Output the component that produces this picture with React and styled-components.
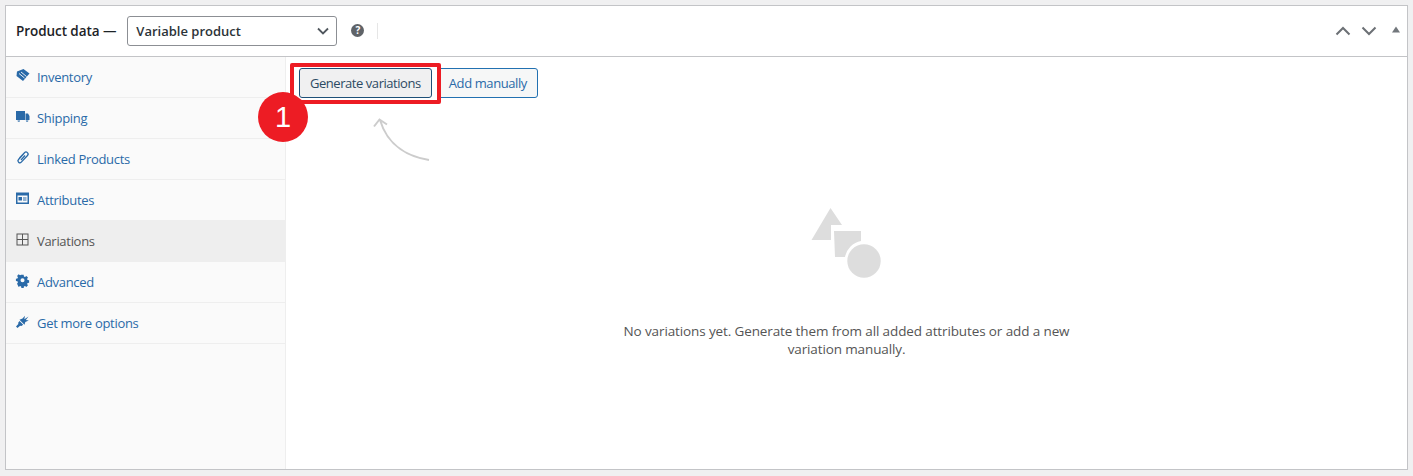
import React from 'react';
import styled, { createGlobalStyle } from 'styled-components';

const Global = createGlobalStyle`
  html, body { margin: 0; padding: 0; background: #f0f0f1; }
  body { font-family: "Open Sans", "Noto Sans", "Liberation Sans", sans-serif; font-size: 13px; }
`;

const Page = styled.div`
  width: 1413px;
  height: 476px;
  padding: 5px 5px 6px 5px;
  box-sizing: border-box;
`;

const Panel = styled.div`
  height: 100%;
  box-sizing: border-box;
  border: 1px solid #c3c4c7;
  background: #fff;
  display: flex;
  flex-direction: column;
`;

const Header = styled.div`
  flex: 0 0 50px;
  display: flex;
  align-items: center;
  border-bottom: 1px solid #c3c4c7;
  padding: 0 10px;
`;

const Title = styled.span`
  font-size: 13.5px;
  font-weight: 600;
  letter-spacing: -0.07px;
  color: #1d2327;
`;

const TypeSelect = styled.div`
  width: 210px;
  height: 30px;
  margin-left: 11px;
  box-sizing: border-box;
  border: 1px solid #8c8f94;
  border-radius: 3px;
  display: flex;
  align-items: center;
  justify-content: space-between;
  padding: 0 7px 0 8px;
  font-size: 13px;
  font-weight: 600;
  color: #2c3338;
`;

const HelpDot = styled.span`
  width: 13px;
  height: 13px;
  margin-left: 14px;
  margin-top: -2px;
  border-radius: 50%;
  background: #5f6368;
  color: #fff;
  font-size: 10px;
  font-weight: 700;
  line-height: 13px;
  text-align: center;
`;

const Divider = styled.span`
  width: 1px;
  height: 16px;
  margin-left: 13px;
  background: #e6e6e6;
`;

const Controls = styled.div`
  margin-left: auto;
  display: flex;
  align-items: center;
  gap: 10px;
  margin-right: -4px;
`;

const Triangle = styled.svg`
  margin-left: 4px;
  margin-top: -2px;
`;

const Body = styled.div`
  flex: 1;
  display: flex;
  min-height: 0;
`;

const Sidebar = styled.ul`
  flex: 0 0 279px;
  margin: 0;
  padding: 0;
  list-style: none;
  background: #fafafa;
  border-right: 1px solid #eee;
`;

const Tab = styled.li`
  height: 41px;
  box-sizing: border-box;
  padding-left: 10px;
  display: flex;
  align-items: center;
  gap: 8px;
  font-size: 13px;
  letter-spacing: -0.3px;
  color: ${p => (p.$active ? '#555' : '#2a6aa8')};
  background: ${p => (p.$active ? '#eee' : 'transparent')};
  border-bottom: 1px solid #eee;
  margin-right: ${p => (p.$active ? '-1px' : '0')};
`;

const TabIcon = styled.svg`
  width: 13px;
  height: 13px;
  flex: none;
  margin-top: -4px;
  overflow: visible;
  fill: currentColor;
`;

const Content = styled.div`
  flex: 1;
  position: relative;
  display: flex;
  flex-direction: column;
`;

const Actions = styled.div`
  display: flex;
  gap: 6px;
  padding: 11px 0 0 13px;
`;

const Button = styled.button`
  height: 30px;
  box-sizing: border-box;
  padding: 0 10px;
  border: 1px solid ${p => (p.$focus ? '#1d4f78' : '#2271b1')};
  border-radius: 3px;
  background: ${p => (p.$focus ? '#f0f0f1' : '#f6f7f7')};
  color: ${p => (p.$focus ? '#2c4a63' : '#2a6aa8')};
  font-family: inherit;
  font-size: 13px;
  letter-spacing: ${p => (p.$focus ? '-0.45px' : '-0.4px')};
  white-space: nowrap;
`;

const Highlight = styled.div`
  position: absolute;
  left: 4px;
  top: 6px;
  width: 151px;
  height: 41px;
  box-sizing: border-box;
  border: 4px solid #ed1c24;
  border-radius: 2px;
`;

const Badge = styled.div`
  position: absolute;
  left: -28px;
  top: 35px;
  width: 50px;
  height: 50px;
  border-radius: 50%;
  background: #ed1c24;
  color: #fff;
  font-family: "Liberation Sans", sans-serif;
  font-size: 29px;
  line-height: 50px;
  text-align: center;
`;

const Arrow = styled.svg`
  position: absolute;
  left: 86px;
  top: 60px;
  width: 62px;
  height: 46px;
  fill: none;
  stroke: #ccc;
  stroke-width: 2;
`;

const Empty = styled.div`
  display: flex;
  flex-direction: column;
  align-items: center;
  padding-top: 109px;
  color: #555;
`;

const Shapes = styled.svg`
  width: 72px;
  height: 72px;
  flex: none;
  fill: #ddd;
`;

const Message = styled.p`
  width: 470px;
  margin: 43px 0 0;
  font-size: 13.5px;
  line-height: 18px;
  text-align: center;
  letter-spacing: -0.12px;
`;

const icons = {
  tag: (
    <>
      <path d="M7.500 0 L13.500 4.500 L7 12 L0.500 7 L1 2.500 Z" />
      <path d="M3 4.500 8.500 9M5 3 10.500 7.500" stroke="#fafafa" strokeWidth="0.9" />
    </>
  ),
  truck: <path d="M0 1h9v9H0zM9.500 3.500H12l1.500 2.500v4h-4zM1.500 10.500a1.300 1.300 0 1 0 2.600 0zM9.800 10.500a1.300 1.300 0 1 0 2.600 0z" />,
  link: (
    <g fill="none" stroke="currentColor" strokeWidth="1.300">
      <path d="M7.500 3 2.500 8.500a1.900 1.900 0 0 0 2.800 2.600L11.500 4.500A2 2 0 0 0 8.500 1.700L3.500 7" />
      <path d="M9 4.500 5 9" />
    </g>
  ),
  card: <path fillRule="evenodd" d="M0 0.500h13v11.500H0zM1.500 3.500v7h10v-7zM2.500 5h3.500v3.500H2.500zM7 5.500h3.500v1H7zM7 7.500h3.500v1H7z" />,
  grid: <path fillRule="evenodd" d="M0.500 0.500h12v12h-12zM1.500 1.500v4.500h4.500v-4.500zM7 1.500v4.500h4.500v-4.500zM1.500 7v4.500h4.500V7zM7 7v4.500h4.500V7z" />,
  gear: <path fillRule="evenodd" d="M5.200 0h2.600l.3 1.800 1.200.6 1.600-1 1.800 1.800-1 1.600.6 1.200 1.700.3v2.600l-1.700.3-.6 1.200 1 1.600-1.800 1.800-1.600-1-1.200.5-.3 1.700H5.200l-.3-1.700-1.200-.5-1.600 1L.3 10.100l1-1.600-.6-1.200L-1 7V4.400l1.700-.3.6-1.200-1-1.600L2.100-.5l1.600 1 1.200-.6zM6.500 4a2.300 2.300 0 1 0 0 4.600 2.300 2.300 0 0 0 0-4.600z" transform="translate(0.800 0.800) scale(0.880)" />,
  plug: <path d="M12.500 1.500 8.300 4.300 9 0.800 6.500 3.500 3.500 4.700 8.500 9.700 9.300 7l3.500-1.500-3-.6zM3.500 6l3.700 3.700-1.800 1.300-1.300-.3L1.500 13 0 11.500l2.300-2.500-.1-1.200z" />,
};

const tabs = [
  ['Inventory', 'tag'],
  ['Shipping', 'truck'],
  ['Linked Products', 'link'],
  ['Attributes', 'card'],
  ['Variations', 'grid'],
  ['Advanced', 'gear'],
  ['Get more options', 'plug'],
];

const Chevron = ({ up }) => (
  <svg width="16" height="10" viewBox="0 0 16 10" fill="none" stroke="#6c7075" strokeWidth="2">
    <path d={up ? 'M1.500 8.500 8 2l6.500 6.500' : 'M1.500 1.500 8 8l6.500-6.500'} />
  </svg>
);

export default function App() {
  return (
    <Page>
      <Global />
      <Panel>
        <Header>
          <Title>Product data —</Title>
          <TypeSelect>
            Variable product
            <svg width="12" height="8" viewBox="0 0 12 8" fill="none" stroke="#50575e" strokeWidth="1.800">
              <path d="M1 1.500 6 6.500l5-5" />
            </svg>
          </TypeSelect>
          <HelpDot>?</HelpDot>
          <Divider />
          <Controls>
            <Chevron up />
            <Chevron />
            <Triangle width="10" height="8" viewBox="0 0 10 8" fill="#72777c">
              <path d="M5 0.500 9 6.500H1Z" />
            </Triangle>
          </Controls>
        </Header>
        <Body>
          <Sidebar>
            {tabs.map(([label, icon]) => (
              <Tab key={label} $active={label === 'Variations'}>
                <TabIcon viewBox="0 0 13 13">{icons[icon]}</TabIcon>
                {label}
              </Tab>
            ))}
          </Sidebar>
          <Content>
            <Actions>
              <Button $focus>Generate variations</Button>
              <Button>Add manually</Button>
            </Actions>
            <Highlight />
            <Arrow viewBox="0 0 62 46">
              <path d="M57 43C38 40 16 30 8 3" />
              <path d="M2 9.500 7.500 2.500 15 7.500" />
            </Arrow>
            <Badge>1</Badge>
            <Empty>
              <Shapes viewBox="0 0 72 72">
                <path d="M19.500 1 31 18H20V33H0.500Z" />
                <path d="M23 24H50V34A20 20 0 0 0 34 50H24Z" />
                <circle cx="53" cy="54" r="16.700" />
              </Shapes>
              <Message>No variations yet. Generate them from all added attributes or add a new variation manually.</Message>
            </Empty>
          </Content>
        </Body>
      </Panel>
    </Page>
  );
}
